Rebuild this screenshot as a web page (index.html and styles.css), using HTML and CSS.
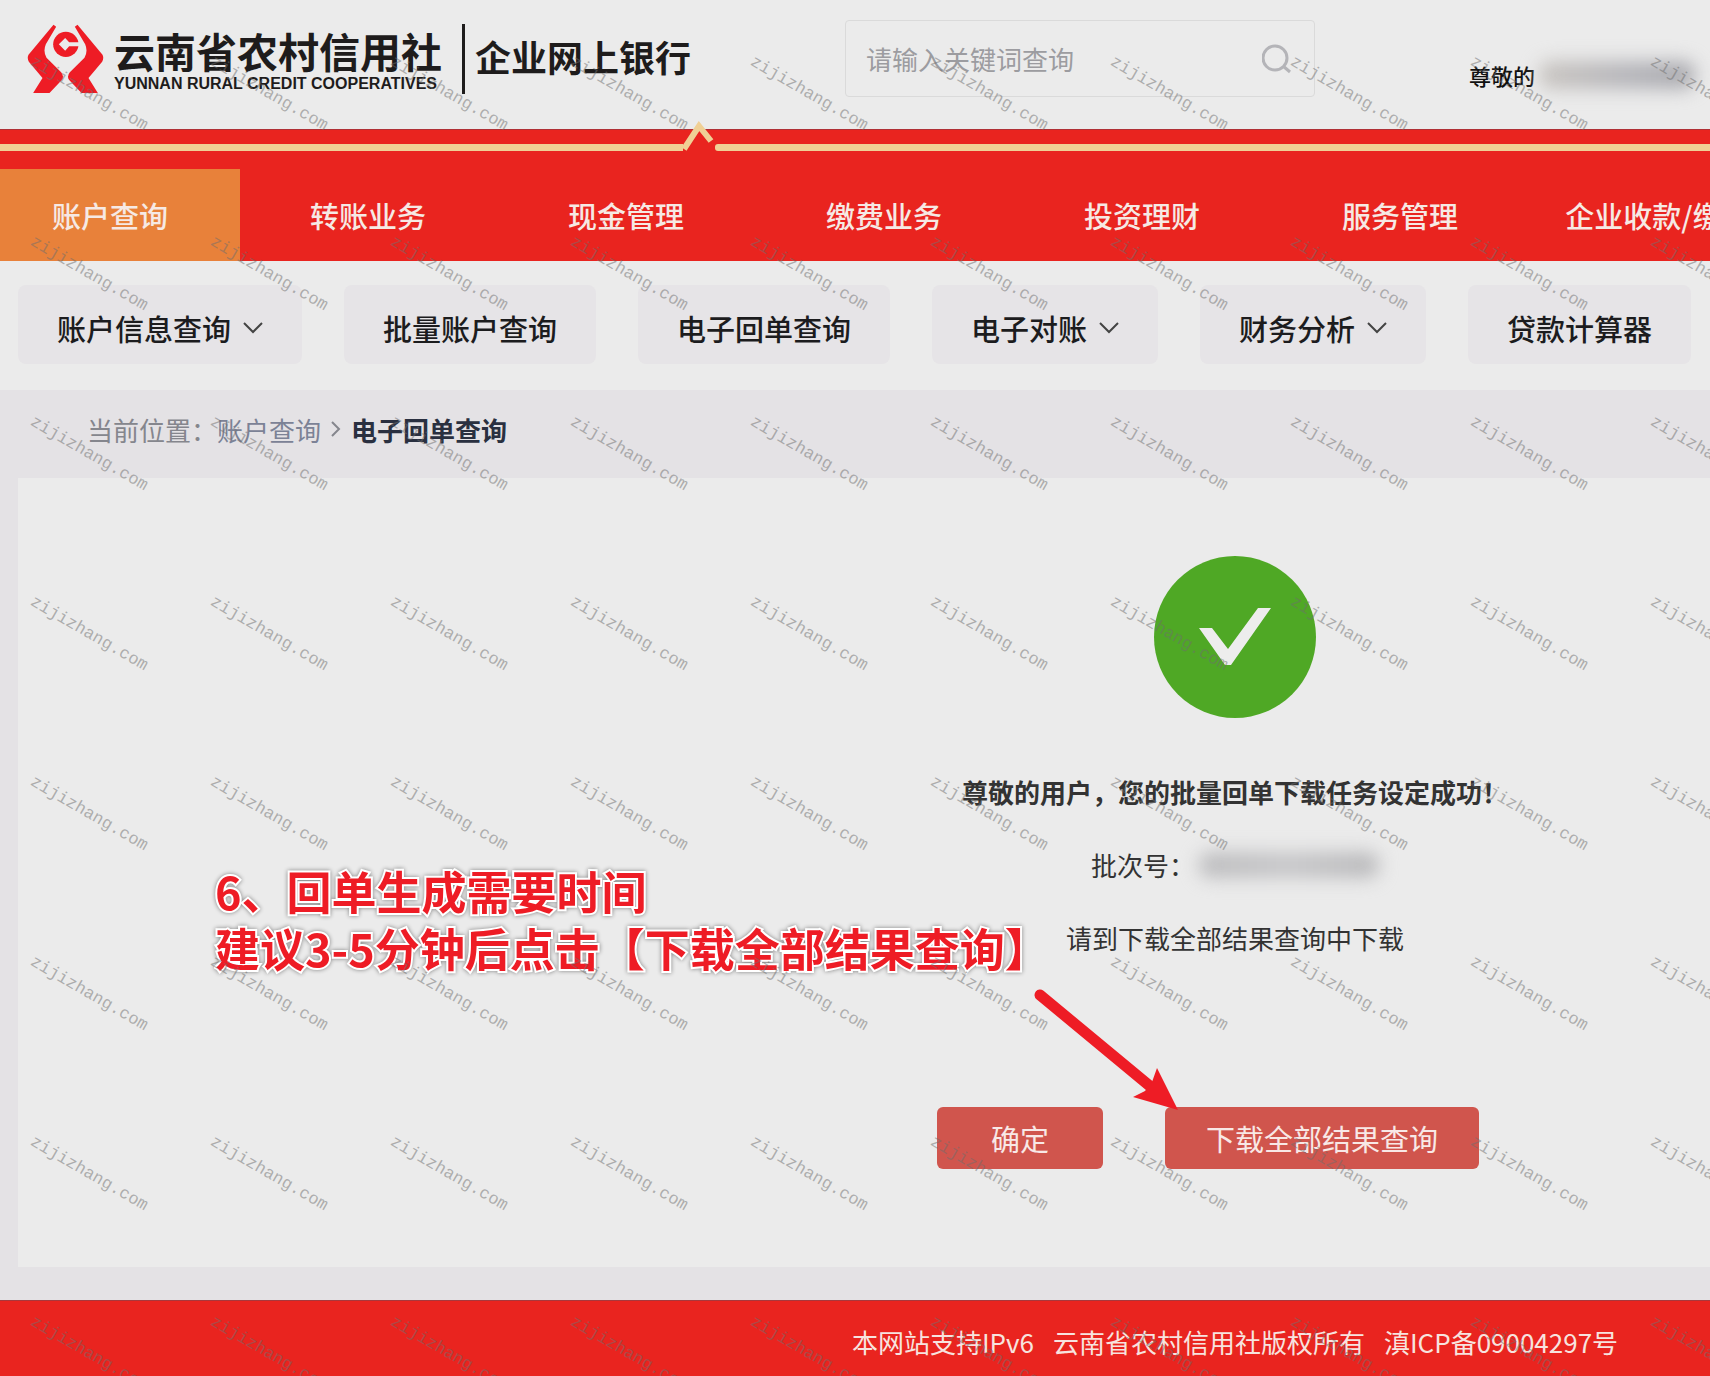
FILE: index.html
```html
<!DOCTYPE html>
<html lang="zh-CN">
<head>
    <meta charset="UTF-8">
    <meta name="viewport" content="width=device-width, initial-scale=1.0">
    <title>云南省农村信用社 企业网上银行</title>
    <link rel="stylesheet" href="styles.css">
</head>
<body>

<header class="header">
    <a class="brand" href="#">
        <svg class="brand-icon" viewBox="20 30 230 210" aria-hidden="true">
            <path id="hand" fill="#ee1c25" d="M99 32 L24 122 Q19 132 25 143 L66 192 L38 237 H87 L124 198 Q132 187 122 175 L78 131 Q67 112 76 91 L107 38 Z"/>
            <use href="#hand" transform="translate(270 0) scale(-1 1)"/>
            <circle cx="136" cy="91" r="38" fill="#ee1c25"/>
            <path fill="#ebebeb" d="M134 72 L146 85 H176 V97 H146 L134 110 L115 91 Z"/>
        </svg>
        <span class="brand-text">
            <span class="brand-cn">云南省农村信用社</span>
            <span class="brand-en">YUNNAN RURAL CREDIT COOPERATIVES</span>
        </span>
        <span class="brand-sub">企业网上银行</span>
    </a>
    <form class="search">
        <input type="text" class="search-input" aria-label="请输入关键词查询" placeholder="请输入关键词查询">
        <button type="button" class="search-btn" aria-label="搜索">
            <svg width="32" height="32" viewBox="0 0 32 32" fill="none" stroke="#b4b4b8" stroke-width="3">
                <circle cx="13" cy="15" r="12"/>
                <path d="M21 23 L28 29"/>
            </svg>
        </button>
    </form>
    <div class="greeting">尊敬的<span class="masked masked-user"></span></div>
</header>

<div class="ribbon">
    <span class="ribbon-line ribbon-left"></span>
    <svg class="ribbon-peak" width="32" height="32" viewBox="0 0 32 32" aria-hidden="true">
        <path fill="#e9241f" d="M2 30 L16 8 L32 24 V32 H2 Z"/>
        <path fill="none" stroke="#f0d095" stroke-width="6" d="M1 30 L16 7 L28 22"/>
    </svg>
    <span class="ribbon-line ribbon-right"></span>
</div>

<nav class="main-nav">
    <a class="active" href="#">账户查询</a>
    <a href="#">转账业务</a>
    <a href="#">现金管理</a>
    <a href="#">缴费业务</a>
    <a href="#">投资理财</a>
    <a href="#">服务管理</a>
    <a href="#">企业收款/缴费</a>
</nav>

<nav class="sub-nav">
    <a href="#">账户信息查询
        <svg class="chevron" width="20" height="12" viewBox="0 0 20 12"><path d="M1 1 L10 10 L19 1"/></svg>
    </a>
    <a href="#">批量账户查询</a>
    <a href="#">电子回单查询</a>
    <a href="#">电子对账
        <svg class="chevron" width="20" height="12" viewBox="0 0 20 12"><path d="M1 1 L10 10 L19 1"/></svg>
    </a>
    <a href="#">财务分析
        <svg class="chevron" width="20" height="12" viewBox="0 0 20 12"><path d="M1 1 L10 10 L19 1"/></svg>
    </a>
    <a href="#">贷款计算器</a>
</nav>

<main class="main">
    <div class="breadcrumb">
        <span>当前位置：</span>
        <a href="#">账户查询</a>
        <svg class="crumb-arrow" width="10" height="16" viewBox="0 0 10 16"><path d="M1 1 L8 8 L1 15"/></svg>
        <strong>电子回单查询</strong>
    </div>

    <section class="panel">
        <svg class="result-icon" viewBox="0 0 162 162" aria-hidden="true">
            <circle cx="81" cy="81" r="81" fill="#4fa825"/>
            <path fill="#ededed" d="M45 72 H58 L74 93 L104 52 H117 L77 109 H71 Z"/>
        </svg>
        <h1 class="result-title">尊敬的用户，您的批量回单下载任务设定成功！</h1>
        <p class="result-text batch">批次号：<span class="masked masked-batch"></span></p>
        <p class="result-text">请到下载全部结果查询中下载</p>
        <div class="actions">
            <button type="button" class="btn btn-ok">确定</button>
            <button type="button" class="btn btn-download">下载全部结果查询</button>
        </div>

        <p class="note">6、回单生成需要时间<br>建议3-5分钟后点击【下载全部结果查询】</p>
        <svg class="note-arrow" width="146" height="122" viewBox="0 0 146 122" aria-hidden="true">
            <path stroke="#ee1c25" stroke-width="11" stroke-linecap="round" d="M7 7 L118 99"/>
            <path fill="#ee1c25" d="M145 122 L124 80 L119 94 L112 103 L100 109 Z"/>
        </svg>
    </section>
</main>

<footer class="footer">
    <span>本网站支持IPv6</span>
    <span>云南省农村信用社版权所有</span>
    <span>滇ICP备09004297号</span>
</footer>

<div class="watermark" id="watermark" aria-hidden="true"></div>

<script>
    // fill the page with watermark tiles, one every 180px
    const layer = document.getElementById('watermark');
    const cols = Math.ceil(layer.clientWidth / 180);
    const rows = Math.ceil(layer.clientHeight / 180);

    layer.style.gridTemplateColumns = 'repeat(' + cols + ', 180px)';

    for (let i = 0; i < cols * rows; i++) {
        const mark = document.createElement('span');
        mark.textContent = 'zijizhang.com';
        layer.appendChild(mark);
    }
</script>

</body>
</html>
```
FILE: styles.css
```css
* {
    box-sizing: border-box;
}

body {
    position: relative;
    margin: 0;
    overflow-x: hidden;
    font-family: "Noto Sans CJK SC", "Noto Sans", sans-serif;
    font-size: 26px;
    color: #333;
    background: #ebebeb;
}

a {
    color: inherit;
    text-decoration: none;
}

h1, p {
    margin: 0;
}

/* header */
.header {
    display: flex;
    align-items: center;
    height: 129px;
    padding: 0 0 12px 27px;
}

.brand {
    display: flex;
    align-items: center;
    flex: none;
    width: 818px;
    color: #1e1c1c;
}

.brand-icon {
    width: 77px;
    height: 70px;
    margin-right: 10px;
}

.brand-text {
    display: flex;
    flex-direction: column;
    padding: 2px 20px 0 0;
    border-right: 3px solid #1e1c1c;
}

.brand-cn {
    font-size: 41px;
    font-weight: 700;
    line-height: 48px;
}

.brand-en {
    font-family: "Liberation Sans", Arial, sans-serif;
    font-size: 16px;
    font-weight: 700;
    line-height: 20px;
    white-space: nowrap;
}

.brand-sub {
    padding-bottom: 6px;
    margin-left: 10px;
    font-size: 36px;
    font-weight: 700;
}

.search {
    display: flex;
    align-items: center;
    flex: none;
    width: 470px;
    height: 77px;
    padding: 0 20px;
    border: 1px solid #dadada;
    border-radius: 4px;
}

.search-input {
    flex: 1;
    min-width: 0;
    padding: 0;
    border: none;
    outline: none;
    background: none;
    font: inherit;
}

.search-input::placeholder {
    color: #9c9ca0;
    opacity: 1;
}

.search-btn {
    display: flex;
    padding: 0;
    border: none;
    background: none;
    cursor: pointer;
}

.greeting {
    display: flex;
    align-items: center;
    flex: none;
    margin: 32px 0 0 154px;
    font-size: 22px;
    font-weight: 500;
    color: #111;
}

.masked {
    display: inline-block;
    border-radius: 12px;
    filter: blur(9px);
}

.masked-user {
    width: 156px;
    height: 28px;
    margin-left: 4px;
    background: linear-gradient(90deg, #c9c5c1, #b5b5ba 60%, #a9a9ae);
}

.masked-batch {
    width: 180px;
    height: 26px;
    margin-left: 4px;
    background: linear-gradient(90deg, #bcbcbe, #c6c6c8 50%, #b9b9bb);
}

/* ribbon above the navigation */
.ribbon {
    display: flex;
    align-items: flex-end;
    height: 40px;
    padding-bottom: 18px;
    border-top: 1px solid #b03035;
    background: #e9241f;
}

.ribbon-line {
    height: 7px;
    background: #f0d095;
}

.ribbon-left {
    flex: 0 0 683px;
}

.ribbon-peak {
    flex: none;
    overflow: visible;
}

.ribbon-right {
    flex: 1;
    border-radius: 3px 0 0 3px;
}

.main-nav {
    display: flex;
    gap: 18px;
    height: 92px;
    overflow: hidden;
    background: #e9241f;
}

.main-nav a {
    flex: 0 0 240px;
    padding-right: 20px;
    font-size: 29px;
    font-weight: 500;
    line-height: 92px;
    text-align: center;
    white-space: nowrap;
    color: #f6e9e4;
}

.main-nav .active {
    background: #e8813a;
}

.sub-nav {
    display: flex;
    gap: 42px;
    padding: 24px 18px 26px;
}

.sub-nav a {
    display: flex;
    align-items: center;
    flex: none;
    gap: 12px;
    height: 79px;
    padding: 6px 39px 0;
    border-radius: 8px;
    background: #e6e4e7;
    font-size: 29px;
    font-weight: 500;
    color: #1c1c1e;
}

.chevron, .crumb-arrow {
    fill: none;
    stroke: #444;
    stroke-width: 2;
}

/* content */
.main {
    padding: 0 0 33px 18px;
    background: #e4e2e5;
}

.breadcrumb {
    display: flex;
    align-items: center;
    height: 88px;
    padding: 0 0 10px 69px;
    color: #85868d;
}

.breadcrumb a {
    color: #7c8296;
}

.breadcrumb strong {
    color: #2a3040;
}

.crumb-arrow {
    margin: 0 10px;
    stroke: #85868d;
}

.panel {
    position: relative;
    display: flex;
    flex-direction: column;
    align-items: center;
    padding: 78px 0 98px 742px;
    background: #ebebeb;
}

.result-icon {
    width: 162px;
    height: 162px;
    margin-bottom: 54px;
}

.result-title {
    font-size: 26px;
    font-weight: 700;
    line-height: 40px;
}

.result-text {
    margin-top: 33px;
    line-height: 40px;
}

.batch {
    display: flex;
    align-items: center;
}

.actions {
    display: flex;
    gap: 62px;
    margin-top: 149px;
    padding-right: 54px;
}

.btn {
    height: 62px;
    border: none;
    border-radius: 6px;
    background: #d0554d;
    font-family: inherit;
    font-size: 29px;
    color: #f8e8e6;
    cursor: pointer;
}

.btn-ok {
    padding: 0 54px;
}

.btn-download {
    padding: 0 41px;
}

/* step note drawn over the page */
.note {
    position: absolute;
    top: 384px;
    left: 197px;
    font-size: 45px;
    font-weight: 700;
    line-height: 57px;
    white-space: nowrap;
    color: #ee1c25;
    -webkit-text-stroke: 4px #fff;
    paint-order: stroke fill;
    filter: drop-shadow(0 0 2px rgba(0, 0, 0, 0.45));
}

.note-arrow {
    position: absolute;
    top: 510px;
    left: 1015px;
}

.footer {
    display: flex;
    align-items: center;
    justify-content: center;
    gap: 19px;
    height: 77px;
    padding: 4px 0 0 760px;
    border-top: 1px solid #a8383c;
    background: #e9241f;
    color: #f7e3df;
    white-space: nowrap;
}

.watermark {
    position: absolute;
    inset: 0;
    display: grid;
    grid-auto-rows: 180px;
    overflow: hidden;
    pointer-events: none;
}

.watermark span {
    padding: 51px 0 0 32px;
    font-family: "Liberation Mono", monospace;
    font-size: 17px;
    line-height: 20px;
    color: rgba(110, 110, 110, 0.5);
    transform: rotate(30deg);
    transform-origin: 32px 60px;
}
```
